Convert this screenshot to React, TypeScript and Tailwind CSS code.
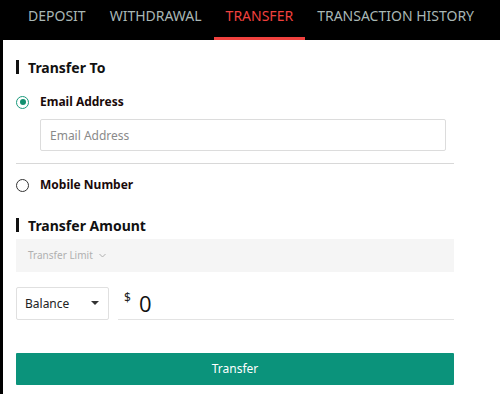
import React, { useState } from 'react';

const tabs = ['DEPOSIT', 'WITHDRAWAL', 'TRANSFER', 'TRANSACTION HISTORY'];

function SectionTitle({ children }: { children: React.ReactNode }) {
  return (
    <div className="flex items-center gap-[9px] h-[20px]">
      <span className="w-[3px] h-[14px] bg-[#111]" />
      <span className="text-[14px] font-bold text-[#111]">{children}</span>
    </div>
  );
}

function Radio({ checked, label, onClick }: { checked: boolean; label: string; onClick: () => void }) {
  return (
    <button onClick={onClick} className="flex items-center gap-[11px] h-[20px]">
      <span
        className={
          checked
            ? 'w-[13px] h-[13px] rounded-full border-[1.5px] border-[#1a9a7c] flex items-center justify-center'
            : 'w-[13px] h-[13px] rounded-full border-[1.5px] border-[#333]'
        }
      >
        {checked && <span className="w-[6px] h-[6px] rounded-full bg-[#13906f]" />}
      </span>
      <span className="text-[12px] font-bold text-[#1a0a0a]">{label}</span>
    </button>
  );
}

export default function App() {
  const [method, setMethod] = useState<'email' | 'mobile'>('email');

  return (
    <div className="w-[500px] h-[394px] bg-black font-['Noto_Sans',sans-serif] overflow-hidden">
      <div className="h-[40px] flex items-stretch pl-[16px]">
        {tabs.map((t) => (
          <div
            key={t}
            className={
              t === 'TRANSFER'
                ? 'px-[12px] flex items-center text-[14px] text-[#f0413e] border-b-[3px] border-[#f0413e] pb-[6px]'
                : 'px-[12px] flex items-center text-[14px] text-[#a9b7b5] pb-[9px]'
            }
          >
            {t}
          </div>
        ))}
      </div>
      <div className="ml-[3px] bg-white h-[354px] pl-[13px] pr-[46px] pt-[17px]">
        <SectionTitle>Transfer To</SectionTitle>
        <div className="mt-[15px]">
          <Radio checked={method === 'email'} label="Email Address" onClick={() => setMethod('email')} />
        </div>
        <div className="mt-[7px] pl-[24px] pr-[8px]">
          <input
            placeholder="Email Address"
            className="w-full h-[32px] border border-[#dcdcdc] rounded-[2px] px-[9px] text-[12px] placeholder:text-[#8a8a8a] outline-none"
          />
        </div>
        <div className="mt-[12px] border-t border-[#d8d8d8]" />
        <div className="mt-[11px]">
          <Radio checked={method === 'mobile'} label="Mobile Number" onClick={() => setMethod('mobile')} />
        </div>
        <div className="mt-[20px]">
          <SectionTitle>Transfer Amount</SectionTitle>
        </div>
        <div className="mt-[4px] h-[33px] bg-[#f5f5f5] flex items-center px-[12px] gap-[6px] text-[10px] text-[#b0b0b0]">
          Transfer Limit
          <svg width="7" height="5" viewBox="0 0 7 5" fill="none" stroke="#b0b0b0" strokeWidth="1">
            <path d="M0.5 1l3 3 3-3" />
          </svg>
        </div>
        <div className="mt-[15px] flex items-stretch gap-[9px]">
          <div className="w-[93px] h-[33px] border border-[#e0e0e0] rounded-[2px] flex items-center justify-between pl-[8px] pr-[9px] text-[12px] text-[#222]">
            Balance
            <svg width="8" height="5" viewBox="0 0 8 5">
              <path d="M0 0h8L4 4z" fill="#333" />
            </svg>
          </div>
          <div className="flex-1 border-b border-[#e3e3e3] flex items-start pl-[6px] pt-[1px]">
            <span className="text-[12px] text-[#222] mt-[1px]">$</span>
            <span className="ml-[8px] text-[22px] leading-[30px] text-[#111] font-['Open_Sans',sans-serif]">0</span>
          </div>
        </div>
        <button className="mt-[33px] w-full h-[32px] bg-[#0b937b] text-white text-[12px] rounded-[1px]">
          Transfer
        </button>
      </div>
    </div>
  );
}
